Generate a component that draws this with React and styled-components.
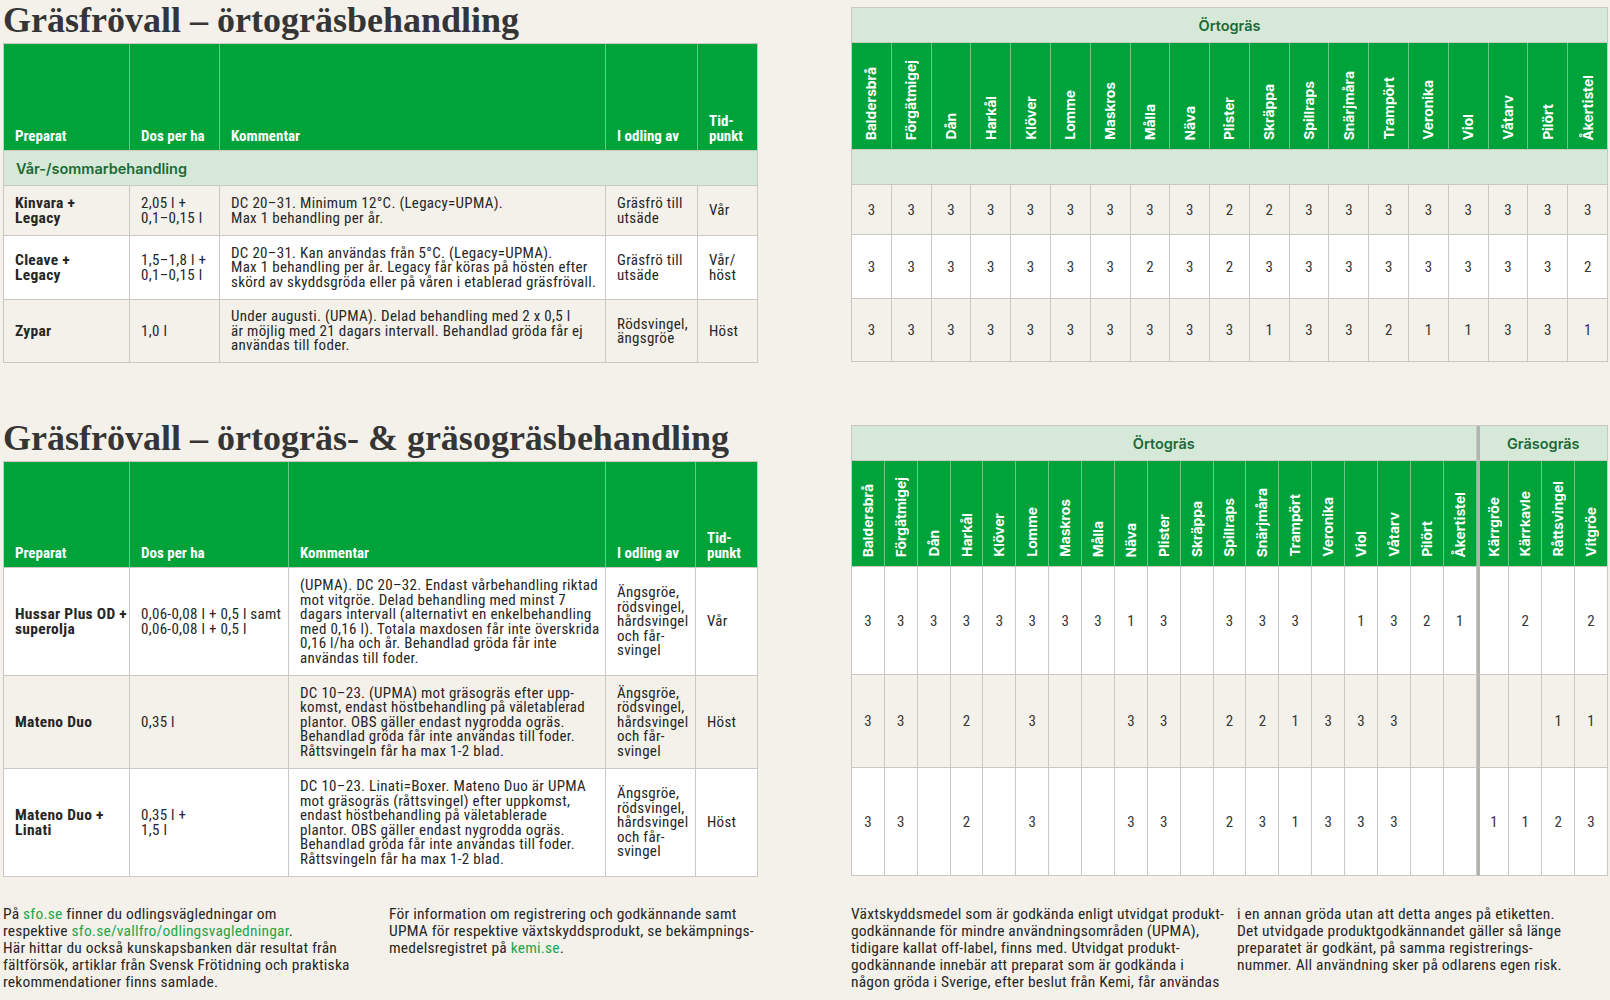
import React from "react";
import styled, { createGlobalStyle } from "styled-components";

const NARROW = `"Roboto Condensed", "Liberation Sans Narrow", "Arial Narrow", "DejaVu Sans Condensed", sans-serif`;
const GREEN = "#00a23a";
const LIGHT = "#d6e8d8";
const BEIGE = "#f4f1eb";
const LINE = "#c9c8c3";
const DARKGREEN = "#1c6a36";

const GlobalStyle = createGlobalStyle`
  html, body { margin: 0; padding: 0; background: ${BEIGE}; }
  body { font-family: ${NARROW}; color: #222; }
`;

const Page = styled.div`
  width: 1610px;
  height: 1000px;
  overflow: hidden;
  box-sizing: border-box;
  padding-left: 3px;
`;

const Section = styled.section`
  display: flex;
  gap: 93px;
  margin-top: ${(p) => p.$top}px;
`;

const LeftCol = styled.div`
  width: 755px;
  display: flex;
  flex-direction: column;
`;

const RightCol = styled.div`
  width: 757px;
  padding-top: ${(p) => p.$offset}px;
`;

const Title = styled.h2`
  margin: 0;
  height: ${(p) => p.$h}px;
  padding-top: ${(p) => p.$pt || 0}px;
  box-sizing: border-box;
  font-family: "Liberation Serif", serif;
  font-weight: 700;
  font-size: 36px;
  line-height: 36px;
  color: #353535;
  white-space: nowrap;
`;

const Grid = styled.div`
  display: grid;
  grid-template-columns: ${(p) => p.$cols};
  grid-template-rows: ${(p) => p.$rows};
  border-top: 1px solid ${LINE};
  border-left: 1px solid ${LINE};
`;

const HeadCell = styled.div`
  background: ${GREEN};
  border-right: 1px solid ${(p) => (p.$last ? LINE : "#6cc586")};
  border-bottom: 1px solid ${LINE};
  display: flex;
  align-items: flex-end;
  padding: 0 4px 6px 11px;
  color: #fff;
  font-weight: 700;
  font-size: 15px;
  line-height: 15px;
  white-space: pre;
`;

const GroupRow = styled.div`
  grid-column: 1 / -1;
  background: ${LIGHT};
  border-right: 1px solid ${LINE};
  border-bottom: 1px solid ${LINE};
  display: flex;
  align-items: center;
  padding-left: 12px;
  font-family: Inter, "Noto Sans", sans-serif;
  font-weight: 600;
  font-size: 14.5px;
  color: ${DARKGREEN};
`;

const Cell = styled.div`
  background: ${(p) => p.$bg};
  border-right: 1px solid ${LINE};
  border-bottom: 1px solid ${LINE};
  display: flex;
  align-items: center;
  padding: 0 0 0 11px;
  font-size: ${(p) => (p.$bold ? 15.5 : 15)}px;
  letter-spacing: 0.3px;
  line-height: 14.5px;
  font-weight: ${(p) => (p.$bold ? 700 : 400)};
  color: #262626;
  white-space: pre;
  overflow: hidden;
`;

const Band = styled.div`
  grid-column: span ${(p) => p.$span};
  background: ${LIGHT};
  border-right: 1px solid ${LINE};
  border-bottom: 1px solid ${LINE};
  border-left: ${(p) => (p.$divider ? "3px solid #b3b3b0" : "none")};
  display: flex;
  align-items: center;
  justify-content: center;
  font-family: Inter, "Noto Sans", sans-serif;
  font-weight: 600;
  font-size: 14.5px;
  color: ${DARKGREEN};
`;

const VHead = styled.div`
  background: ${GREEN};
  border-right: 1px solid ${(p) => (p.$last ? LINE : "#6cc586")};
  border-bottom: 1px solid ${LINE};
  border-left: ${(p) => (p.$divider ? "3px solid #b3b3b0" : "none")};
  display: flex;
  align-items: flex-end;
  justify-content: center;
  padding-bottom: 9px;
  overflow: hidden;
`;

const VText = styled.span`
  writing-mode: vertical-rl;
  transform: rotate(180deg);
  white-space: nowrap;
  font-family: Inter, "Noto Sans", sans-serif;
  font-weight: 700;
  font-size: 13.8px;
  line-height: 14px;
  color: #fff;
`;

const Num = styled.div`
  background: ${(p) => p.$bg};
  border-right: 1px solid ${LINE};
  border-bottom: 1px solid ${LINE};
  border-left: ${(p) => (p.$divider ? "3px solid #b3b3b0" : "none")};
  display: flex;
  align-items: center;
  justify-content: center;
  font-size: 15px;
  color: #353535;
`;

const Footer = styled.footer`
  display: flex;
  gap: 93px;
  margin-top: ${(p) => p.$top}px;
`;

const FootGroup = styled.div`
  width: ${(p) => p.$w}px;
  display: grid;
  grid-template-columns: ${(p) => p.$first}px 1fr;
`;

const FootText = styled.p`
  margin: 0;
  font-size: 15.5px;
  letter-spacing: 0.2px;
  line-height: 17px;
  color: #262626;
  white-space: nowrap;
`;

const Link = styled.span`
  color: #1fa549;
`;

const WEEDS = [
  "Baldersbrå", "Förgätmigej", "Dån", "Harkål", "Klöver", "Lomme", "Maskros",
  "Målla", "Näva", "Plister", "Skräppa", "Spillraps", "Snärjmåra", "Trampört",
  "Veronika", "Viol", "Våtarv", "Pilört", "Åkertistel",
];
const GRASS = ["Kärrgröe", "Kärrkavle", "Råttsvingel", "Vitgröe"];
const HEADS = ["Preparat", "Dos per ha", "Kommentar", "I odling av", "Tid-\npunkt"];

const TABLE1 = [
  {
    bg: BEIGE,
    name: "Kinvara +\nLegacy",
    dos: "2,05 l +\n0,1–0,15 l",
    comment: "DC 20–31. Minimum 12°C. (Legacy=UPMA).\nMax 1 behandling per år.",
    crop: "Gräsfrö till\nutsäde",
    time: "Vår",
    scores: "3333333332233333333",
  },
  {
    bg: "#ffffff",
    name: "Cleave +\nLegacy",
    dos: "1,5–1,8 l +\n0,1–0,15 l",
    comment:
      "DC 20–31. Kan användas från 5°C. (Legacy=UPMA).\nMax 1 behandling per år. Legacy får köras på hösten efter\nskörd av skyddsgröda eller på våren i etablerad gräsfrövall.",
    crop: "Gräsfrö till\nutsäde",
    time: "Vår/\nhöst",
    scores: "3333333232333333332",
  },
  {
    bg: BEIGE,
    name: "Zypar",
    dos: "1,0 l",
    comment:
      "Under augusti. (UPMA). Delad behandling med 2 x 0,5 l\när möjlig med 21 dagars intervall. Behandlad gröda får ej\nanvändas till foder.",
    crop: "Rödsvingel,\nängsgröe",
    time: "Höst",
    scores: "3333333333133211331",
  },
];

const CROP2 = "Ängsgröe,\nrödsvingel,\nhårdsvingel\noch får-\nsvingel";

const TABLE2 = [
  {
    bg: "#ffffff",
    name: "Hussar Plus OD +\nsuperolja",
    dos: "0,06-0,08 l + 0,5 l samt\n0,06-0,08 l + 0,5 l",
    comment:
      "(UPMA). DC 20–32. Endast vårbehandling riktad\nmot vitgröe. Delad behandling med minst 7\ndagars intervall (alternativt en enkelbehandling\nmed 0,16 l). Totala maxdosen får inte överskrida\n0,16 l/ha och år. Behandlad gröda får inte\nanvändas till foder.",
    crop: CROP2,
    time: "Vår",
    scores: "3333333313-333-1321-2-2",
  },
  {
    bg: BEIGE,
    name: "Mateno Duo",
    dos: "0,35 l",
    comment:
      "DC 10–23. (UPMA) mot gräsogräs efter upp-\nkomst, endast höstbehandling på väletablerad\nplantor. OBS gäller endast nygrodda ogräs.\nBehandlad gröda får inte användas till foder.\nRåttsvingeln får ha max 1-2 blad.",
    crop: CROP2,
    time: "Höst",
    scores: "33-2-3--33-221333----11",
  },
  {
    bg: "#ffffff",
    name: "Mateno Duo +\nLinati",
    dos: "0,35 l +\n1,5 l",
    comment:
      "DC 10–23. Linati=Boxer. Mateno Duo är UPMA\nmot gräsogräs (råttsvingel) efter uppkomst,\nendast höstbehandling på väletablerade\nplantor. OBS gäller endast nygrodda ogräs.\nBehandlad gröda får inte användas till foder.\nRåttsvingeln får ha max 1-2 blad.",
    crop: CROP2,
    time: "Höst",
    scores: "33-2-3--33-231333--1123",
  },
];

function InfoTable({ cols, rows, data, group }) {
  return (
    <Grid $cols={cols} $rows={rows}>
      {HEADS.map((h, i) => (
        <HeadCell key={h} $last={i === HEADS.length - 1}>
          {h}
        </HeadCell>
      ))}
      {group && <GroupRow>{group}</GroupRow>}
      {data.map((r) => (
        <React.Fragment key={r.name}>
          <Cell $bg={r.bg} $bold>{r.name}</Cell>
          <Cell $bg={r.bg}>{r.dos}</Cell>
          <Cell $bg={r.bg}>{r.comment}</Cell>
          <Cell $bg={r.bg}>{r.crop}</Cell>
          <Cell $bg={r.bg}>{r.time}</Cell>
        </React.Fragment>
      ))}
    </Grid>
  );
}

function WeedTable({ rows, data, grass, spacer }) {
  const names = grass ? [...WEEDS, ...GRASS] : WEEDS;
  const n = names.length;
  const divAt = WEEDS.length;
  return (
    <Grid $cols={`repeat(${n}, 1fr)`} $rows={rows}>
      <Band $span={WEEDS.length}>Örtogräs</Band>
      {grass && (
        <Band $span={GRASS.length} $divider>
          Gräsogräs
        </Band>
      )}
      {names.map((w, i) => (
        <VHead key={w} $divider={grass && i === divAt} $last={i === n - 1}>
          <VText>{w}</VText>
        </VHead>
      ))}
      {spacer && <GroupRow />}
      {data.map((r, ri) =>
        r.scores.split("").map((s, i) => (
          <Num key={ri + "-" + i} $bg={r.bg} $divider={grass && i === divAt}>
            {s === "-" ? "" : s}
          </Num>
        ))
      )}
    </Grid>
  );
}

export default function App() {
  return (
    <Page>
      <GlobalStyle />
      <Section $top={0}>
        <LeftCol>
          <Title $h={43} $pt={2}>Gräsfrövall – örtogräsbehandling</Title>
          <InfoTable
            cols="126px 90px 386px 92px 1fr"
            rows="107px 35px 50px 64px 63px"
            data={TABLE1}
            group="Vår-/sommarbehandling"
          />
        </LeftCol>
        <RightCol $offset={7}>
          <WeedTable rows="35px 107px 35px 50px 64px 63px" data={TABLE1} spacer />
        </RightCol>
      </Section>

      <Section $top={56}>
        <LeftCol>
          <Title $h={42} $pt={1}>Gräsfrövall – örtogräs- &amp; gräsogräsbehandling</Title>
          <InfoTable
            cols="126px 159px 317px 90px 1fr"
            rows="106px 108px 93px 108px"
            data={TABLE2}
          />
        </LeftCol>
        <RightCol $offset={6}>
          <WeedTable rows="35px 106px 108px 93px 108px" data={TABLE2} grass />
        </RightCol>
      </Section>

      <Footer $top={29}>
        <FootGroup $w={755} $first={386}>
          <FootText>
            På <Link>sfo.se</Link> finner du odlingsvägledningar om
            <br />
            respektive <Link>sfo.se/vallfro/odlingsvagledningar</Link>.
            <br />
            Här hittar du också kunskapsbanken där resultat från
            <br />
            fältförsök, artiklar från Svensk Frötidning och praktiska
            <br />
            rekommendationer finns samlade.
          </FootText>
          <FootText>
            För information om registrering och godkännande samt
            <br />
            UPMA för respektive växtskyddsprodukt, se bekämpnings-
            <br />
            medelsregistret på <Link>kemi.se</Link>.
          </FootText>
        </FootGroup>
        <FootGroup $w={757} $first={386}>
          <FootText>
            Växtskyddsmedel som är godkända enligt utvidgat produkt-
            <br />
            godkännande för mindre användningsområden (UPMA),
            <br />
            tidigare kallat off-label, finns med. Utvidgat produkt-
            <br />
            godkännande innebär att preparat som är godkända i
            <br />
            någon gröda i Sverige, efter beslut från Kemi, får användas
          </FootText>
          <FootText>
            i en annan gröda utan att detta anges på etiketten.
            <br />
            Det utvidgade produktgodkännandet gäller så länge
            <br />
            preparatet är godkänt, på samma registrerings-
            <br />
            nummer. All användning sker på odlarens egen risk.
          </FootText>
        </FootGroup>
      </Footer>
    </Page>
  );
}
